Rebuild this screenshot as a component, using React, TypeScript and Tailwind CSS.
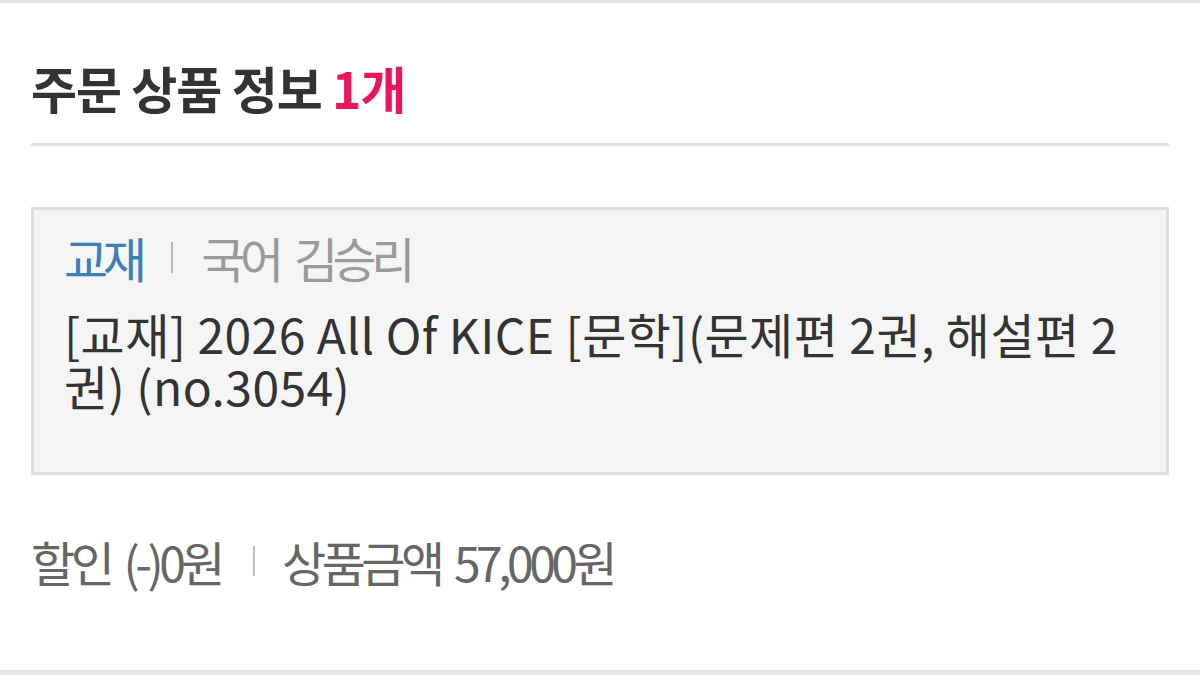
export default function App() {
  const font = { fontFamily: '"Noto Sans CJK KR", "Noto Sans", sans-serif' };
  return (
    <div className="w-[1200px] h-[675px] bg-white flex flex-col overflow-hidden" style={font}>
      <div className="h-[3px] bg-[#e6e6e6]" />
      <div className="flex-1 px-[31px]">
        <div className="pt-[54px] pb-[26px] border-b-[3px] border-[#e3e3e3]">
          <h1 className="text-[50px] font-bold leading-[60px] text-[#333] tracking-[-1px]">
            주문 상품 정보 <span className="text-[#e8175d]">1개</span>
          </h1>
        </div>
        <div className="mt-[61px] h-[268px] bg-[#f5f5f5] border-[3px] border-[#dddddd] pl-[30px] pr-[36px] pt-[21px]">
          <div className="flex items-center text-[48px] leading-[52px] tracking-[-5.5px] [word-spacing:10px]">
            <span className="text-[#3a7fb5]">교재</span>
            <span className="ml-[30px] mr-[28px] h-[31px] w-[2px] bg-[#b8b8b8]" />
            <span className="text-[#9a9a9a]">국어 김승리</span>
          </div>
          <p className="mt-[24px] text-[48px] leading-[52px] text-[#333] tracking-[0.4px]">
            [교재] 2026 All Of KICE [문학](문제편 2권, 해설편 2권) (no.3054)
          </p>
        </div>
        <div className="mt-[60px] flex items-center text-[48px] leading-[52px] text-[#666] tracking-[-4.5px] [word-spacing:7px]">
          <span>할인 (-)0원</span>
          <span className="ml-[32px] mr-[27px] h-[30px] w-[2px] bg-[#bcbcbc]" />
          <span>상품금액 57,000원</span>
        </div>
      </div>
      <div className="h-[5px] bg-[#e6e6e6]" />
    </div>
  );
}
